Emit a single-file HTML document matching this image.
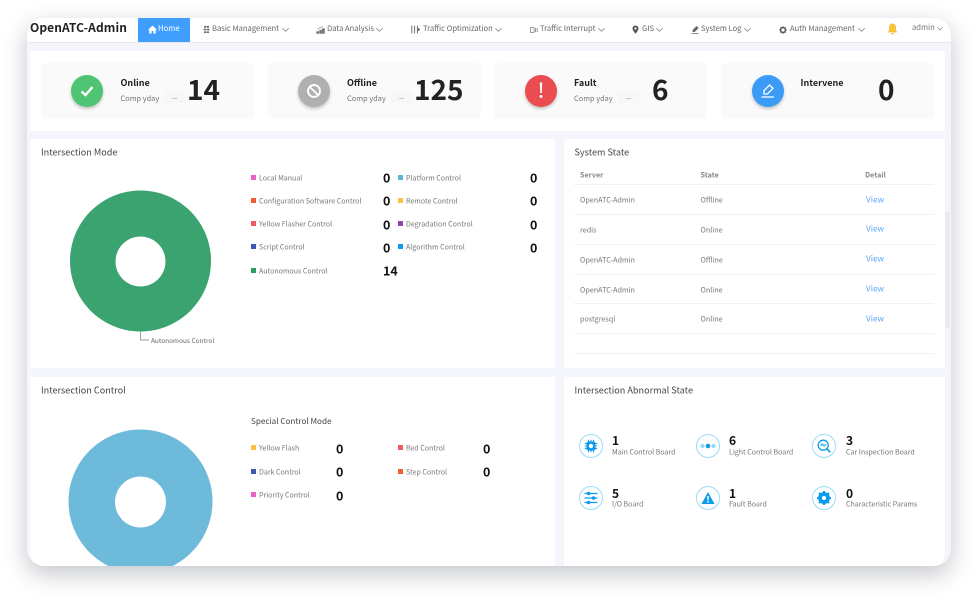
<!DOCTYPE html>
<html><head><meta charset="utf-8"><style>
html,body{margin:0;padding:0;width:977px;height:600px;background:#fff;overflow:hidden}
body{position:relative;font-family:"Noto Sans CJK SC","Liberation Sans",sans-serif;color:#666}
#win{position:absolute;left:27px;top:18px;width:924px;height:548px;border-radius:17px;background:#f5f6fb;box-shadow:0 8px 24px rgba(40,50,70,.28)}
.a{position:absolute;white-space:nowrap}
.p{position:absolute;background:#fff}
.t{position:absolute;white-space:nowrap;line-height:14px;height:14px;transform:translateY(-7px)}
.nav{font-size:7.6px;color:#666}
.lg{font-size:7.05px;color:#777;transform:translateY(-6.5px)}
.n{font-size:12.5px;color:#111;font-weight:700;transform:translateY(-7.5px)}
.m{font-size:12px;transform:translateY(-7px)}
.sq{position:absolute;width:5px;height:5px}
.h{font-size:9.1px;color:#444;transform:translateY(-7.7px)}
.tb{font-size:7.2px;color:#777;transform:translateY(-6.6px)}
.v{font-size:8.2px;color:#5aa6f8;transform:translateY(-7.5px)}
.sl{font-size:7.4px;color:#777}
.b{font-size:28px;font-weight:700;color:#222;transform:translateY(-8px)}
.card{position:absolute;width:213px;height:56px;top:63px;background:#fafafa;border-radius:4px}
.ic{position:absolute;top:75px;width:32px;height:32px;border-radius:50%;box-shadow:0 2px 3px rgba(0,0,0,.22)}
.ln{position:absolute;left:574px;width:360px;height:1px;background:#eff1f5}
.ci{position:absolute;width:22px;height:22px;border:1px solid #9adcf8;border-radius:50%;background:#fff}
</style></head><body>
<div id="win"></div>

<!-- header -->
<div class="p" style="left:27px;top:18px;width:924px;height:24px;border-radius:17px 17px 0 0;border-bottom:1px solid #e6e9ef"></div>
<div class="t" style="left:30px;top:28px;font-size:12px;font-weight:700;color:#1f1f1f;letter-spacing:.1px">OpenATC-Admin</div>
<div class="p" style="left:138px;top:18px;width:52px;height:24px;background:#409eff"></div>
<svg class="a" style="left:148px;top:25px" width="9" height="9" viewBox="0 0 9 9"><path d="M4.5 .6L9 4.8H7.7V8.6H5.4V6H3.6V8.6H1.3V4.8H0z" fill="#fff"/></svg>
<div class="t" style="left:158px;top:28.5px;font-size:7.7px;color:#fff">Home</div>

<svg class="a" style="left:202px;top:25px" width="9" height="9" viewBox="0 0 9 9"><path d="M2 1h5v1.6H2zM1.5 3.7h6v1.6h-6zM2 6.4h5V8H2z" fill="#666"/><path d="M4.5 .3V8.700" stroke="#fff" stroke-width=".5"/></svg>
<div class="t nav" style="left:212px;top:29px">Basic Management</div>
<svg class="a" style="left:282px;top:28px" width="7" height="4"><path d="M.3.3L3.5 3.3L6.7.3" fill="none" stroke="#777" stroke-width=".7"/></svg>

<svg class="a" style="left:316px;top:25px" width="9" height="9" viewBox="0 0 9 9"><path d="M.5 6.5h2.2v2H.5zM3.5 5h2.2v3.5H3.5zM6.3 3.5h2.2v5H6.3zM1 4.5L4 2.5L7 1.5" fill="#777" stroke="#777" stroke-width=".5"/></svg>
<div class="t nav" style="left:327px;top:29px">Data Analysis</div>
<svg class="a" style="left:376px;top:28px" width="7" height="4"><path d="M.3.3L3.5 3.3L6.7.3" fill="none" stroke="#777" stroke-width=".7"/></svg>

<svg class="a" style="left:411px;top:25px" width="10" height="9" viewBox="0 0 10 9"><path d="M.8.8V8.4M3.6.8V8.4M6.4.8V8.4" stroke="#666" stroke-width=".9" fill="none"/><path d="M6.4 2.5L9.4 4.5L6.4 6.5z" fill="#666"/></svg>
<div class="t nav" style="left:423px;top:29px">Traffic Optimization</div>
<svg class="a" style="left:495px;top:28px" width="7" height="4"><path d="M.3.3L3.5 3.3L6.7.3" fill="none" stroke="#777" stroke-width=".7"/></svg>

<svg class="a" style="left:530px;top:25.5px" width="8" height="8" viewBox="0 0 8 8"><rect x=".5" y="1.5" width="3.5" height="5" fill="none" stroke="#888" stroke-width=".8"/><path d="M5.5 2v4M7.2 2v4" stroke="#888" stroke-width=".9"/></svg>
<div class="t nav" style="left:540px;top:29px">Traffic Interrupt</div>
<svg class="a" style="left:598px;top:28px" width="7" height="4"><path d="M.3.3L3.5 3.3L6.7.3" fill="none" stroke="#777" stroke-width=".7"/></svg>

<svg class="a" style="left:632px;top:25px" width="7" height="9" viewBox="0 0 7 9"><path fill-rule="evenodd" d="M3.5.5A3 3 0 0 1 6.5 3.5C6.5 5.5 3.5 8.7 3.5 8.7S.5 5.5.5 3.5A3 3 0 0 1 3.5.5zM3.5 2.4a1.1 1.1 0 1 0 .01 0z" fill="#555"/></svg>
<div class="t nav" style="left:642px;top:29px">GIS</div>
<svg class="a" style="left:656px;top:28px" width="7" height="4"><path d="M.3.3L3.5 3.3L6.7.3" fill="none" stroke="#777" stroke-width=".7"/></svg>

<svg class="a" style="left:691px;top:25px" width="9" height="9" viewBox="0 0 9 9"><path d="M5.5 1L7.7 3L3.7 7H1.6V5zM.6 8H7.6V8.8H.6z" fill="#666"/></svg>
<div class="t nav" style="left:701px;top:29px">System Log</div>
<svg class="a" style="left:744px;top:28px" width="7" height="4"><path d="M.3.3L3.5 3.3L6.7.3" fill="none" stroke="#777" stroke-width=".7"/></svg>

<svg class="a" style="left:779px;top:25.5px" width="8" height="8" viewBox="0 0 8 8"><circle cx="4" cy="4" r="2.5" fill="none" stroke="#555" stroke-width="1.4"/><path d="M4 0v8M0 4h8M1.2 1.2l5.6 5.6M6.8 1.2L1.2 6.8" stroke="#555" stroke-width=".7"/><circle cx="4" cy="4" r="1.6" fill="#fff"/></svg>
<div class="t nav" style="left:790px;top:29px">Auth Management</div>
<svg class="a" style="left:858px;top:28px" width="7" height="4"><path d="M.3.3L3.5 3.3L6.7.3" fill="none" stroke="#777" stroke-width=".7"/></svg>

<svg class="a" style="left:887px;top:23px" width="11" height="12" viewBox="0 0 11 12"><path d="M5.5.5C7.8.5 9 2.4 9 4.6V7.5L10.5 9.4H.5L2 7.5V4.6C2 2.4 3.2.5 5.5.5zM4 10h3a1.5 1.5 0 0 1-3 0z" fill="#f5c33b"/></svg>
<div class="t" style="left:912px;top:28px;font-size:7.6px;color:#777">admin</div>
<svg class="a" style="left:937px;top:27px" width="6" height="4"><path d="M.3.3L3 3L5.7.3" fill="none" stroke="#888" stroke-width=".7"/></svg>

<!-- stats -->
<div class="p" style="left:30px;top:51px;width:915px;height:80px"></div>
<div class="card" style="left:41px"></div>
<div class="card" style="left:268px"></div>
<div class="card" style="left:494px"></div>
<div class="card" style="left:721px"></div>

<div class="ic" style="left:71px;background:#4fc473"></div>
<svg class="a" style="left:79px;top:84px" width="16" height="14" viewBox="0 0 16 14"><path d="M2.5 7.5L6.5 11L13.5 3" fill="none" stroke="#fff" stroke-width="2.400"/></svg>
<div class="t" style="left:120.500px;top:83px;font-size:9px;font-weight:700;color:#222">Online</div>
<div class="t sl" style="left:120.500px;top:98.500px">Comp yday</div>
<div class="a" style="left:164px;top:92px;width:22px;height:11px;background:#f6f7f9;border-radius:2px"></div>
<div class="t sl" style="left:172px;top:98.500px">--</div>
<div class="t b" style="left:187px;top:90px">14</div>

<div class="ic" style="left:298px;background:#b0b0b0"></div>
<svg class="a" style="left:305px;top:82px" width="18" height="18" viewBox="0 0 18 18"><circle cx="9" cy="9" r="6" fill="none" stroke="#fff" stroke-width="1.900"/><path d="M5 5l8 8" stroke="#fff" stroke-width="1.900"/></svg>
<div class="t" style="left:347px;top:83px;font-size:9px;font-weight:700;color:#222">Offline</div>
<div class="t sl" style="left:347px;top:98.500px">Comp yday</div>
<div class="a" style="left:391px;top:92px;width:22px;height:11px;background:#f6f7f9;border-radius:2px"></div>
<div class="t sl" style="left:399px;top:98.500px">--</div>
<div class="t b" style="left:414px;top:90px">125</div>

<div class="ic" style="left:525px;background:#ea4c4f"></div>
<svg class="a" style="left:537px;top:81px" width="8" height="20" viewBox="0 0 8 20"><path d="M2.800 1.500H5.200L4.800 12H3.200z" fill="#fff"/><circle cx="4" cy="15.500" r="1.500" fill="#fff"/></svg>
<div class="t" style="left:574px;top:83px;font-size:9px;font-weight:700;color:#222">Fault</div>
<div class="t sl" style="left:574px;top:98.500px">Comp yday</div>
<div class="a" style="left:618px;top:92px;width:22px;height:11px;background:#f6f7f9;border-radius:2px"></div>
<div class="t sl" style="left:626px;top:98.500px">--</div>
<div class="t b" style="left:652px;top:90px">6</div>

<div class="ic" style="left:752px;background:#3b9bf6"></div>
<svg class="a" style="left:759px;top:82px" width="18" height="18" viewBox="0 0 18 18"><path d="M10.500 3L14 6.300L8.500 12H5V8.500z" fill="none" stroke="#fff" stroke-width="1.300"/><path d="M2.500 15H15" stroke="#fff" stroke-width="1.300"/></svg>
<div class="t" style="left:800.500px;top:83px;font-size:9px;font-weight:700;color:#222">Intervene</div>
<div class="t b" style="left:878px;top:90px">0</div>

<!-- panels -->
<div class="p" style="left:30px;top:139px;width:525px;height:229px"></div>
<div class="p" style="left:564px;top:139px;width:381px;height:229px"></div>
<div class="p" style="left:30px;top:377px;width:525px;height:189px;border-radius:0 0 0 14px"></div>
<div class="p" style="left:564px;top:377px;width:381px;height:189px;border-radius:0 0 12px 0"></div>
<div class="a" style="left:945px;top:212px;width:5px;height:116px;background:#e9ebef"></div>

<div class="t h" style="left:41px;top:152px">Intersection Mode</div>
<div class="t h" style="left:574.500px;top:152px">System State</div>
<div class="t h" style="left:41px;top:390px">Intersection Control</div>
<div class="t h" style="left:574.500px;top:390px">Intersection Abnormal State</div>

<!-- pie 1 -->
<svg class="a" style="left:60px;top:180px" width="170" height="170" viewBox="60 180 170 170"><path fill-rule="evenodd" d="M140.500 190.500a70.500 70.500 0 1 0 .01 0zM140.500 236.500a25 25 0 1 1-.01 0z" fill="#3ba36f"/><path d="M140.500 331.500V340H149" fill="none" stroke="#777" stroke-width=".7"/></svg>
<div class="t" style="left:151px;top:339.500px;font-size:6.500px;color:#666">Autonomous Control</div>

<!-- legend 1 -->
<div class="sq" style="left:251px;top:174.500px;background:#e963c3"></div><div class="t lg" style="left:259px;top:177.500px">Local Manual</div><div class="t n" style="left:383px;top:178px">0</div>
<div class="sq" style="left:251px;top:197.500px;background:#f55d2c"></div><div class="t lg" style="left:259px;top:200.500px">Configuration Software Control</div><div class="t n" style="left:383px;top:201px">0</div>
<div class="sq" style="left:251px;top:221px;background:#ef5a62"></div><div class="t lg" style="left:259px;top:224px">Yellow Flasher Control</div><div class="t n" style="left:383px;top:224.500px">0</div>
<div class="sq" style="left:251px;top:244px;background:#3f57b6"></div><div class="t lg" style="left:259px;top:247px">Script Control</div><div class="t n" style="left:383px;top:247.500px">0</div>
<div class="sq" style="left:251px;top:267.500px;background:#2c9c65"></div><div class="t lg" style="left:259px;top:270.500px">Autonomous Control</div><div class="t n" style="left:383px;top:271px">14</div>

<div class="sq" style="left:398px;top:174.500px;background:#5cb5da"></div><div class="t lg" style="left:406px;top:177.500px">Platform Control</div><div class="t n" style="left:530px;top:178px">0</div>
<div class="sq" style="left:398px;top:197.500px;background:#fbc044"></div><div class="t lg" style="left:406px;top:200.500px">Remote Control</div><div class="t n" style="left:530px;top:201px">0</div>
<div class="sq" style="left:398px;top:221px;background:#8e44ad"></div><div class="t lg" style="left:406px;top:224px">Degradation Control</div><div class="t n" style="left:530px;top:224.500px">0</div>
<div class="sq" style="left:398px;top:244px;background:#109ceb"></div><div class="t lg" style="left:406px;top:247px">Algorithm Control</div><div class="t n" style="left:530px;top:247.500px">0</div>

<!-- table -->
<div class="t tb" style="left:580px;top:174.500px;font-weight:700;color:#888">Server</div>
<div class="t tb" style="left:700.500px;top:174.500px;font-weight:700;color:#888">State</div>
<div class="t tb" style="left:865px;top:174.500px;font-weight:700;color:#888">Detail</div>
<div class="ln" style="top:184px"></div>
<div class="ln" style="top:214px"></div>
<div class="ln" style="top:244px"></div>
<div class="ln" style="top:273.500px"></div>
<div class="ln" style="top:303px"></div>
<div class="ln" style="top:333px"></div>
<div class="ln" style="top:353px"></div>
<div class="t tb" style="left:580px;top:200px">OpenATC-Admin</div><div class="t tb" style="left:700.500px;top:200px">Offline</div><div class="t v" style="left:866px;top:199.500px">View</div>
<div class="t tb" style="left:580px;top:229.500px">redis</div><div class="t tb" style="left:700.500px;top:229.500px">Online</div><div class="t v" style="left:866px;top:229px">View</div>
<div class="t tb" style="left:580px;top:259.500px">OpenATC-Admin</div><div class="t tb" style="left:700.500px;top:259.500px">Offline</div><div class="t v" style="left:866px;top:259px">View</div>
<div class="t tb" style="left:580px;top:289.500px">OpenATC-Admin</div><div class="t tb" style="left:700.500px;top:289.500px">Online</div><div class="t v" style="left:866px;top:288.500px">View</div>
<div class="t tb" style="left:580px;top:319px">postgresql</div><div class="t tb" style="left:700.500px;top:319px">Online</div><div class="t v" style="left:866px;top:318.500px">View</div>

<!-- pie 2 -->
<div class="a" style="left:60px;top:420px;width:170px;height:146px;overflow:hidden">
<svg width="170" height="170" viewBox="60 420 170 170" style="display:block"><path fill-rule="evenodd" d="M140.500 429.500a72 72 0 1 0 .01 0zM140.500 476.500a25.500 25.500 0 1 1-.01 0z" fill="#6dbadb"/></svg>
</div>

<!-- legend 2 -->
<div class="t" style="left:251px;top:421.500px;font-size:8.100px;color:#444">Special Control Mode</div>
<div class="sq" style="left:251px;top:445px;background:#fbc044"></div><div class="t lg" style="left:259px;top:448px">Yellow Flash</div><div class="t n" style="left:336px;top:449px">0</div>
<div class="sq" style="left:251px;top:468.500px;background:#3f57b6"></div><div class="t lg" style="left:259px;top:471.500px">Dark Control</div><div class="t n" style="left:336px;top:472px">0</div>
<div class="sq" style="left:251px;top:492px;background:#e963c3"></div><div class="t lg" style="left:259px;top:495px">Priority Control</div><div class="t n" style="left:336px;top:495.500px">0</div>
<div class="sq" style="left:398px;top:445px;background:#ef5a62"></div><div class="t lg" style="left:406px;top:448px">Red Control</div><div class="t n" style="left:483px;top:449px">0</div>
<div class="sq" style="left:398px;top:468.500px;background:#f55d2c"></div><div class="t lg" style="left:406px;top:471.500px">Step Control</div><div class="t n" style="left:483px;top:472px">0</div>

<!-- abnormal -->
<div class="ci" style="left:579px;top:434px"></div>
<svg class="a" style="left:583px;top:438px" width="16" height="16" viewBox="0 0 16 16"><rect x="3.500" y="3.500" width="9" height="9" rx="2" fill="#0e9bec"/><path d="M5.500 1.800v12.400M8 1.800v12.400M10.500 1.800v12.400M1.800 5.500h12.400M1.800 8h12.400M1.800 10.500h12.400" stroke="#0e9bec" stroke-width="1"/><circle cx="8" cy="8" r="2.200" fill="#fff"/></svg>
<div class="t n m" style="left:612px;top:441px">1</div><div class="t lg" style="left:612px;top:451.500px">Main Control Board</div>

<div class="ci" style="left:696px;top:434px"></div>
<svg class="a" style="left:698px;top:440px" width="20" height="12" viewBox="0 0 20 12"><circle cx="4.500" cy="6" r="2" fill="#8fd6f8"/><circle cx="10" cy="6" r="2.300" fill="#0e9bec"/><circle cx="15.500" cy="6" r="2" fill="#8fd6f8"/></svg>
<div class="t n m" style="left:729px;top:441px">6</div><div class="t lg" style="left:729px;top:451.500px">Light Control Board</div>

<div class="ci" style="left:812px;top:434px"></div>
<svg class="a" style="left:816px;top:438px" width="16" height="16" viewBox="0 0 16 16"><circle cx="7.200" cy="7.200" r="5" fill="none" stroke="#0e9bec" stroke-width="1.300"/><path d="M11 11l3.300 3.300" stroke="#0e9bec" stroke-width="1.600"/><path d="M4.500 8L6.300 5.800L8 8L10 6" fill="none" stroke="#0e9bec" stroke-width="1"/></svg>
<div class="t n m" style="left:846px;top:441px">3</div><div class="t lg" style="left:846px;top:451.500px">Car Inspection Board</div>

<div class="ci" style="left:579px;top:486px"></div>
<svg class="a" style="left:583px;top:491px" width="16" height="14" viewBox="0 0 16 14"><path d="M1.500 2.500h13M1.500 7h13M1.500 11.500h13" stroke="#0e9bec" stroke-width="1.200"/><circle cx="5.500" cy="2.500" r="1.800" fill="#0e9bec"/><circle cx="10.500" cy="7" r="1.800" fill="#0e9bec"/><circle cx="5.500" cy="11.500" r="1.800" fill="#0e9bec"/></svg>
<div class="t n m" style="left:612px;top:493.500px">5</div><div class="t lg" style="left:612px;top:503.500px">I/O Board</div>

<div class="ci" style="left:696px;top:486px"></div>
<svg class="a" style="left:700px;top:490px" width="16" height="16" viewBox="0 0 16 16"><path fill-rule="evenodd" d="M8 2L14.500 14H1.500zM7.200 6H8.800L8.600 10.300H7.400zM7.200 11H8.800V12.500H7.200z" fill="#0e9bec"/></svg>
<div class="t n m" style="left:729px;top:493.500px">1</div><div class="t lg" style="left:729px;top:503.500px">Fault Board</div>

<div class="ci" style="left:812px;top:486px"></div>
<svg class="a" style="left:816px;top:490px" width="16" height="16" viewBox="0 0 16 16"><circle cx="8" cy="8" r="4.500" fill="none" stroke="#0e9bec" stroke-width="3"/><path d="M8 1v14M1 8h14M3 3l10 10M13 3L3 13" stroke="#0e9bec" stroke-width="2"/><circle cx="8" cy="8" r="2" fill="#fff"/></svg>
<div class="t n m" style="left:846px;top:493.500px">0</div><div class="t lg" style="left:846px;top:503.500px">Characteristic Params</div>
</body></html>
